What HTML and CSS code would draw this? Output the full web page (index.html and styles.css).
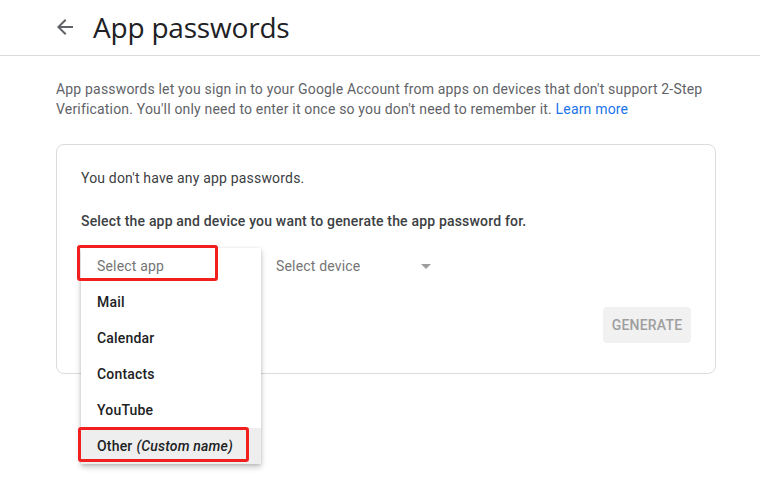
FILE: index.html
```html
<!DOCTYPE html>
<html lang="en">
<head>
<meta charset="utf-8">
<title>App passwords</title>
<link rel="stylesheet" href="styles.css">
</head>
<body>
<header class="topbar">
  <svg class="back" width="16" height="16" viewBox="0 0 16 16" aria-hidden="true">
    <path d="M16 7H3.83l5.59-5.59L8 0 0 8l8 8 1.41-1.41L3.83 9H16z" fill="#5f6368"/>
  </svg>
  <h1 class="title">App passwords</h1>
</header>
<main class="main">
  <p class="intro">App passwords let you sign in to your Google Account from apps on devices that don't support 2-Step Verification. You'll only need to enter it once so you don't need to remember it. <a class="link" href="#">Learn more</a></p>
  <section class="card">
    <p class="none">You don't have any app passwords.</p>
    <p class="prompt">Select the app and device you want to generate the app password for.</p>
    <div class="select-row">
      <div class="app-select">
        <ul class="menu">
          <li class="item placeholder">Select app<span class="mark mark-app"></span></li>
          <li class="item">Mail</li>
          <li class="item">Calendar</li>
          <li class="item">Contacts</li>
          <li class="item">YouTube</li>
          <li class="item active">Other <em class="custom">(Custom name)</em><span class="mark mark-other"></span></li>
        </ul>
      </div>
      <div class="device-select">
        <span>Select device</span>
        <span class="caret"></span>
      </div>
    </div>
    <div class="actions">
      <button class="generate" type="button">Generate</button>
    </div>
  </section>
</main>
</body>
</html>
```
FILE: styles.css
```css
* { box-sizing: border-box; }
html, body { min-height: 100%; }
body {
  margin: 0;
  min-height: 499px;
  background: #fff;
  font-family: Roboto, "Noto Sans", Arial, sans-serif;
  color: #202124;
  letter-spacing: 0.18px;
}
.topbar {
  height: 56px;
  border-bottom: 1px solid #dadce0;
  display: flex;
  align-items: center;
  padding-left: 57px;
}
.back { display: block; margin-top: -1px; }
.title {
  margin: -1px 0 0 20px;
  font-family: "Open Sans", Roboto, sans-serif;
  font-weight: 400;
  font-size: 28px;
  letter-spacing: -0.2px;
  color: #202124;
  line-height: 36px;
}
.main { padding: 0 44px 0 56px; min-height: 443px; }
.intro {
  margin: 23px 0 0;
  font-size: 14px;
  line-height: 20px;
  color: #5f6368;
  max-width: 660px;
}
.link { color: #1a73e8; text-decoration: none; }
.card {
  margin-top: 25px;
  width: 660px;
  height: 230px;
  border: 1px solid #dadce0;
  border-radius: 8px;
  padding: 23px 24px 0;
}
.none {
  margin: 0;
  font-size: 14px;
  line-height: 20px;
  color: #3c4043;
}
.prompt {
  margin: 23px 0 0;
  font-size: 14px;
  line-height: 20px;
  font-weight: 500;
  color: #3c4043;
}
.select-row {
  display: flex;
  height: 36px;
  margin-top: 17px;
}
.app-select {
  position: relative;
  width: 180px;
}
.menu {
  position: absolute;
  top: 0;
  left: 0;
  width: 180px;
  margin: 0;
  padding: 0;
  list-style: none;
  background: #fff;
  box-shadow: 0 3px 6px rgba(0,0,0,0.22), 0 1px 3px rgba(0,0,0,0.12);
  z-index: 2;
}
.item {
  position: relative;
  height: 36px;
  display: flex;
  align-items: center;
  padding-left: 16px;
  font-size: 14px;
  font-weight: 500;
  color: #202124;
}
.item.placeholder { font-weight: 400; color: #757575; }
.item.active { background: #eeeeee; }
.custom { font-weight: 500; margin-left: 4px; }
.mark {
  position: absolute;
  border: 3px solid #f21f1f;
  border-radius: 3px;
  pointer-events: none;
}
.mark-app { left: -4px; top: -3px; width: 141px; height: 36px; }
.mark-other { left: -3px; top: -1px; width: 171px; height: 35px; }
.device-select {
  margin-left: 15px;
  width: 157px;
  display: flex;
  align-items: center;
  justify-content: space-between;
  font-size: 14px;
  color: #757575;
}
.caret {
  width: 0;
  height: 0;
  margin-right: 2px;
  border-left: 5px solid transparent;
  border-right: 5px solid transparent;
  border-top: 5px solid #9e9e9e;
}
.actions {
  display: flex;
  justify-content: flex-end;
  margin-top: 23px;
}
.generate {
  width: 88px;
  height: 36px;
  border: 0;
  border-radius: 4px;
  background: #f1f1f1;
  color: #9e9e9e;
  font-family: Roboto, sans-serif;
  font-size: 14px;
  font-weight: 500;
  letter-spacing: 0.2px;
  text-transform: uppercase;
  padding: 0;
}
```
